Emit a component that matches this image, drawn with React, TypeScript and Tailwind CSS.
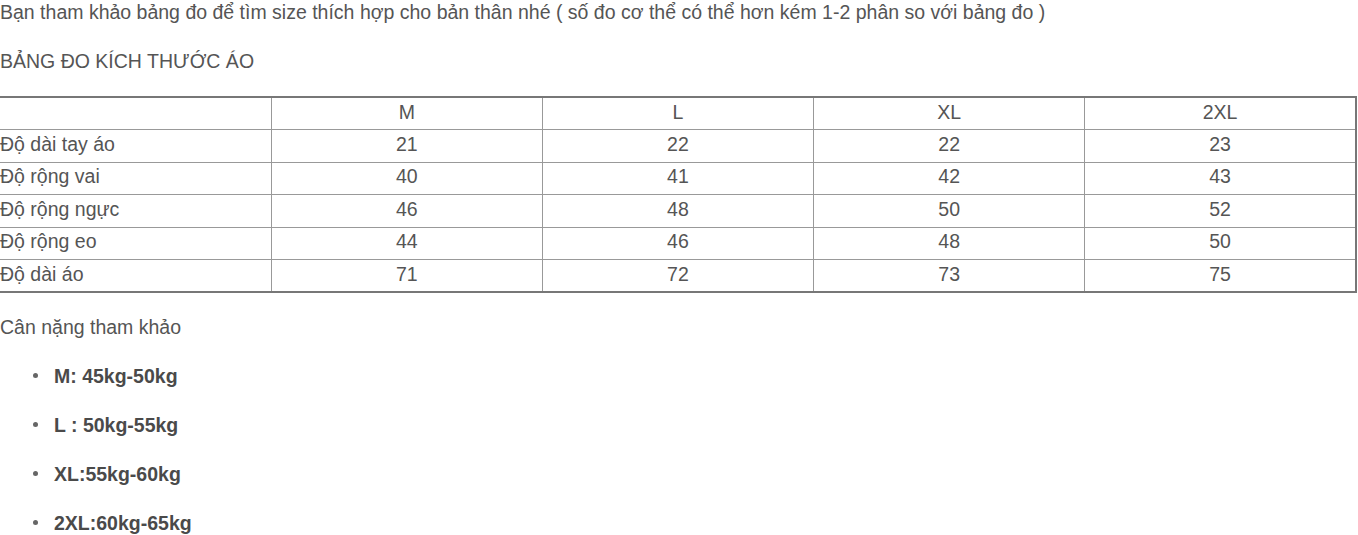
import React from "react";

const sizes = ["M", "L", "XL", "2XL"];

const rows: [string, number[]][] = [
  ["Độ dài tay áo", [21, 22, 22, 23]],
  ["Độ rộng vai", [40, 41, 42, 43]],
  ["Độ rộng ngực", [46, 48, 50, 52]],
  ["Độ rộng eo", [44, 46, 48, 50]],
  ["Độ dài áo", [71, 72, 73, 75]],
];

const weights = ["M: 45kg-50kg", "L : 50kg-55kg", "XL:55kg-60kg", "2XL:60kg-65kg"];

export default function App() {
  return (
    <div className="w-[1358px] h-[535px] overflow-hidden bg-white text-[#555] text-[19.5px] font-['Liberation_Sans',Arial,sans-serif]">
      <p className="leading-[24px]">
        Bạn tham khảo bảng đo để tìm size thích hợp cho bản thân nhé ( số đo cơ thể có thể hơn kém 1-2 phân so với bảng đo )
      </p>
      <p className="mt-[25px] leading-[24px]">BẢNG ĐO KÍCH THƯỚC ÁO</p>

      <table className="mt-[23px] w-[1357px] table-fixed border-collapse border-t-2 border-r-2 border-b-2 border-[#777]">
        <thead>
          <tr className="h-[32.5px]">
            <th className="border-b border-r border-[#999] font-normal"></th>
            {sizes.map((s) => (
              <th key={s} className="border-b border-r border-[#999] font-normal text-center leading-[24px] pb-[4px]">
                {s}
              </th>
            ))}
          </tr>
        </thead>
        <tbody>
          {rows.map(([label, vals]) => (
            <tr key={label} className="h-[32.5px]">
              <td className="border-b border-r border-[#999] text-left pl-0 leading-[24px] pb-[4px]">{label}</td>
              {vals.map((v, i) => (
                <td key={i} className="border-b border-r border-[#999] text-center leading-[24px] pb-[4px]">
                  {v}
                </td>
              ))}
            </tr>
          ))}
        </tbody>
      </table>

      <p className="mt-[22px] leading-[24px]">Cân nặng tham khảo</p>
      <ul className="mt-[12px]">
        {weights.map((w) => (
          <li key={w} className="flex items-center h-[49px] font-bold text-[#4a4a4a]">
            <span className="ml-[33px] mr-[16px] w-[5px] h-[5px] rounded-full bg-[#666]" />
            <span className="leading-[24px]">{w}</span>
          </li>
        ))}
      </ul>
    </div>
  );
}
